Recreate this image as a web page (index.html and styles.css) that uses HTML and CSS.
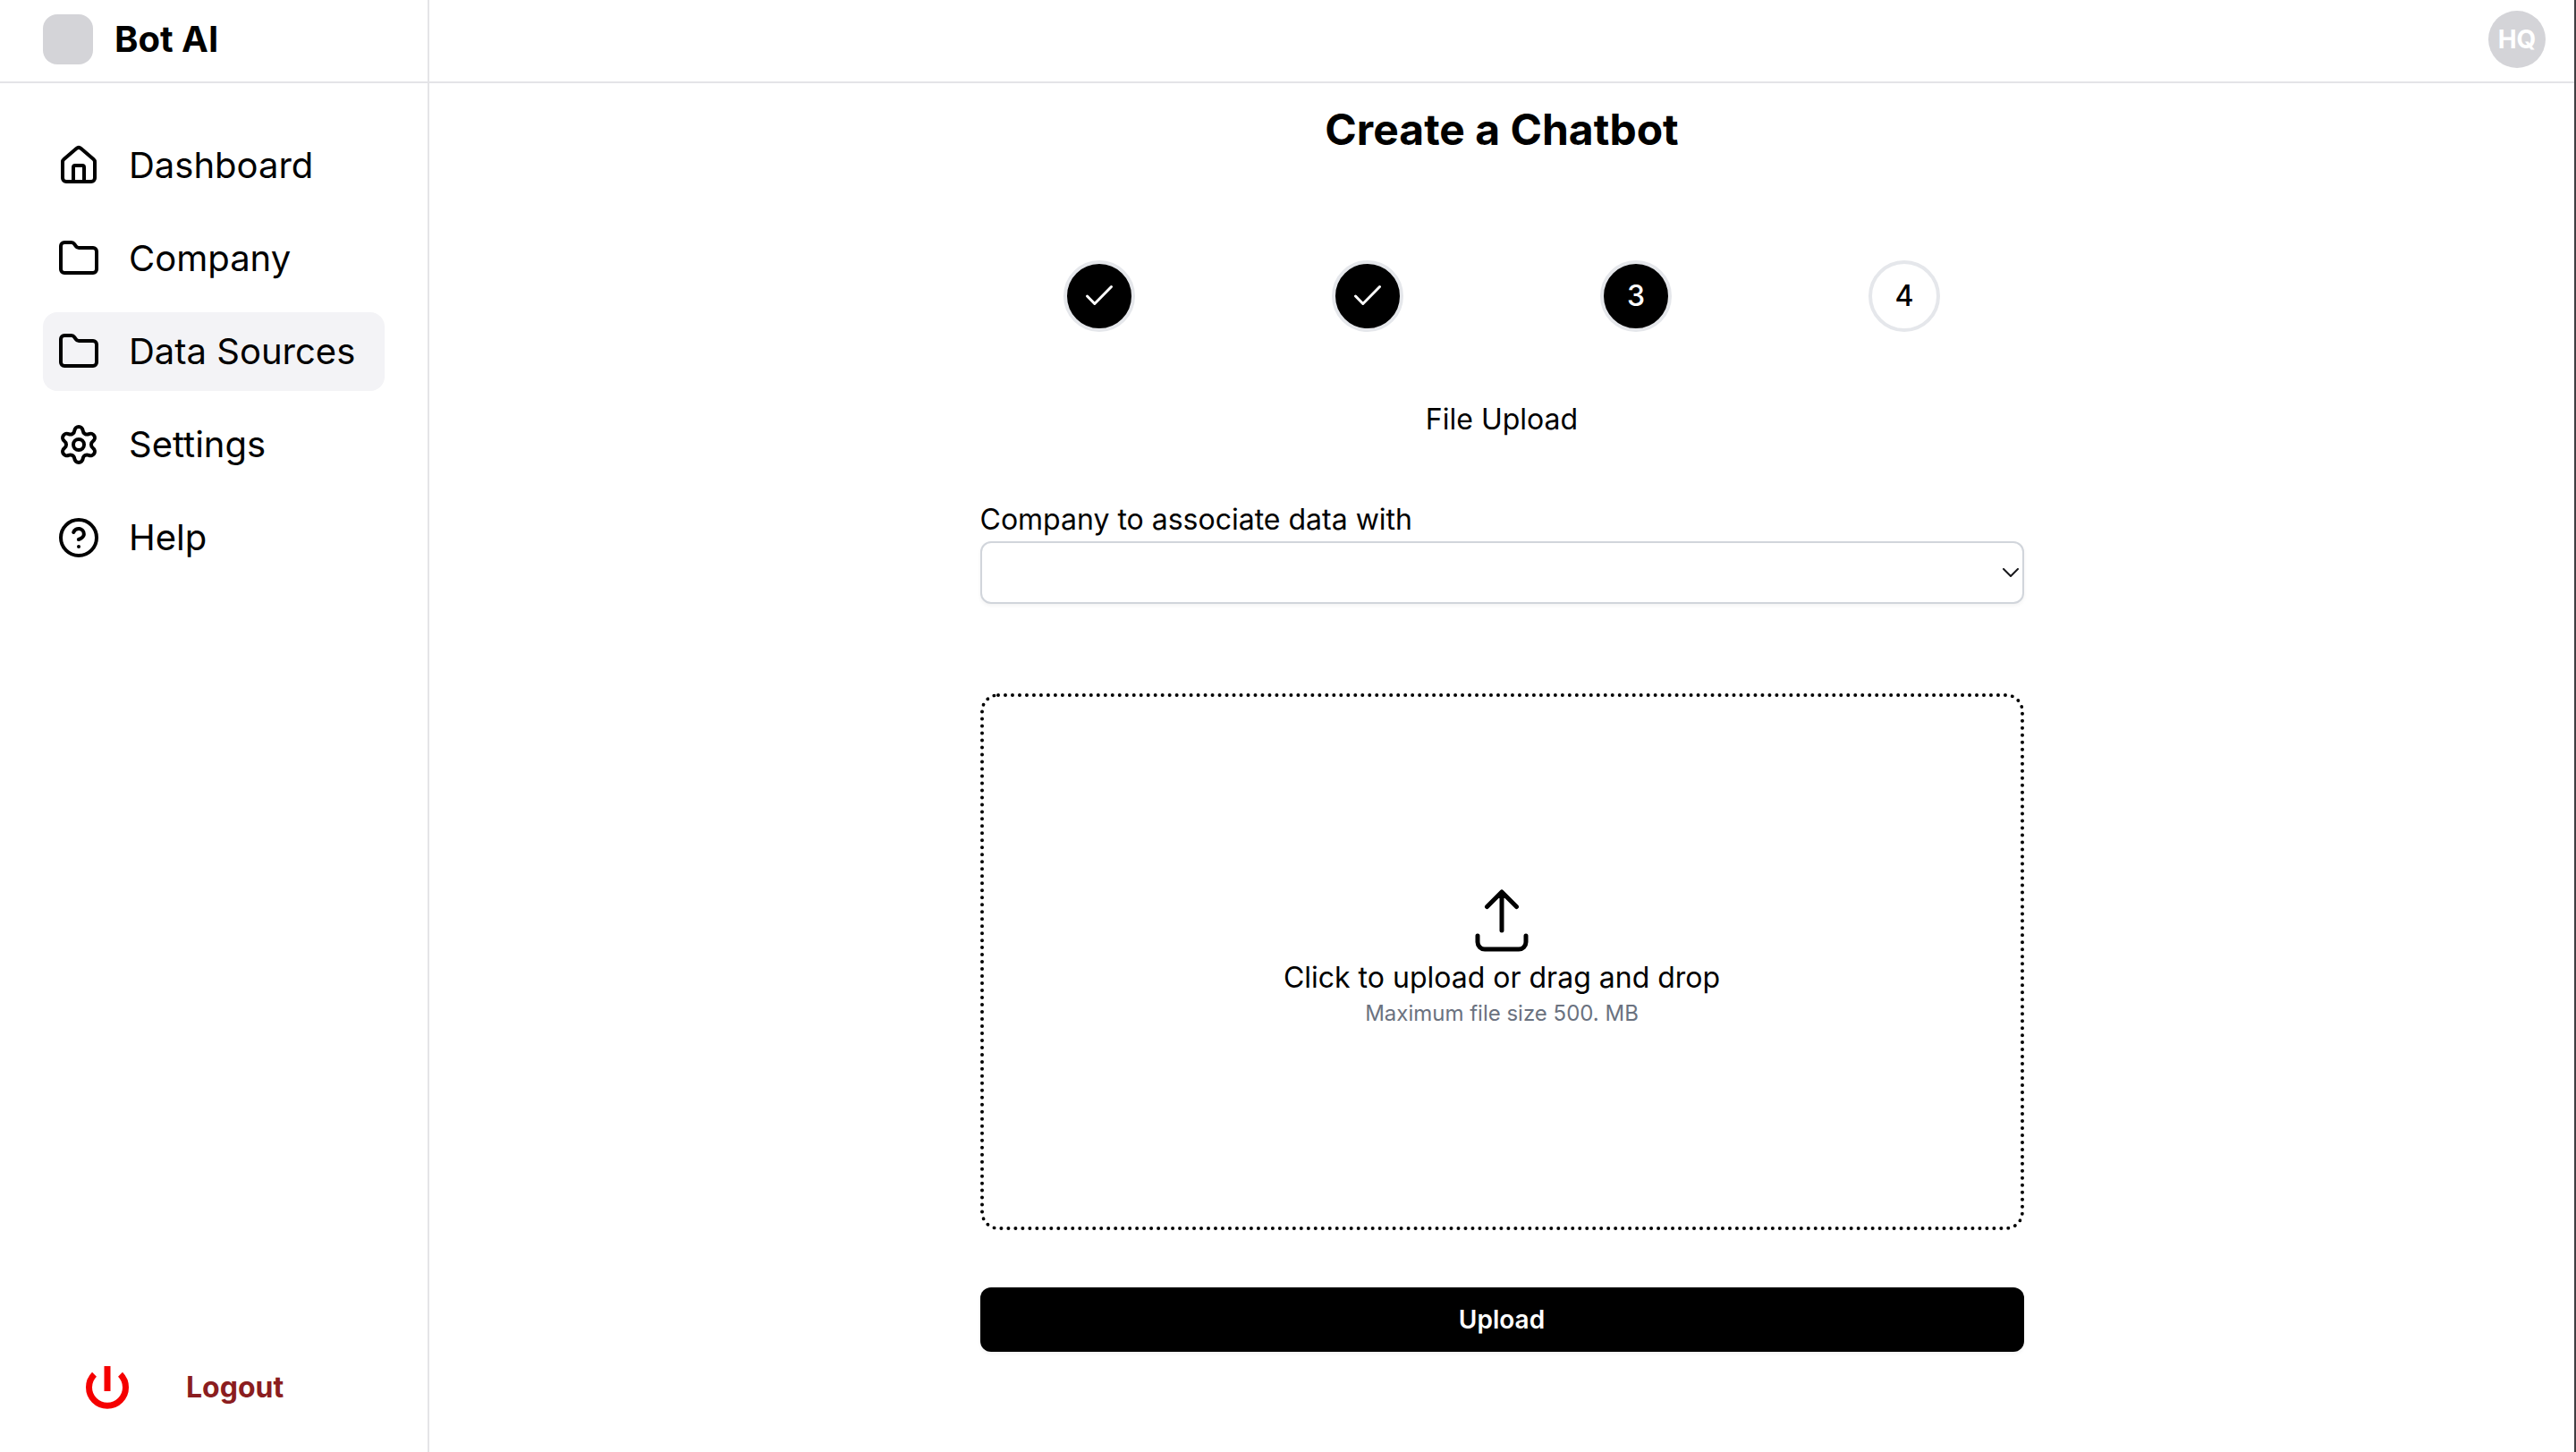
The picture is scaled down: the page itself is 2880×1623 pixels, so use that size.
FILE: index.html
```html
<!DOCTYPE html>
<html lang="en">
<head>
<meta charset="utf-8">
<meta name="viewport" content="width=device-width, initial-scale=1">
<title>Bot AI - Create a Chatbot</title>
<link rel="stylesheet" href="styles.css">
</head>
<body>
<div class="app">
  <aside class="sidebar">
    <div class="brand">
      <span class="brand-logo"></span>
      <span class="brand-name">Bot AI</span>
    </div>
    <nav class="nav">
      <a class="nav-item" href="#">
        <svg class="icon" viewBox="0 0 24 24"><path d="M15 21v-8a1 1 0 0 0-1-1h-4a1 1 0 0 0-1 1v8"/><path d="M3 10a2 2 0 0 1 .709-1.528l7-5.999a2 2 0 0 1 2.582 0l7 5.999A2 2 0 0 1 21 10v9a2 2 0 0 1-2 2H5a2 2 0 0 1-2-2z"/></svg>
        <span>Dashboard</span>
      </a>
      <a class="nav-item" href="#">
        <svg class="icon" viewBox="0 0 24 24"><path d="M20 20a2 2 0 0 0 2-2V8a2 2 0 0 0-2-2h-7.9a2 2 0 0 1-1.69-.9L9.6 3.9A2 2 0 0 0 7.93 3H4a2 2 0 0 0-2 2v13a2 2 0 0 0 2 2Z"/></svg>
        <span>Company</span>
      </a>
      <a class="nav-item active" href="#" aria-current="page">
        <svg class="icon" viewBox="0 0 24 24"><path d="M20 20a2 2 0 0 0 2-2V8a2 2 0 0 0-2-2h-7.9a2 2 0 0 1-1.69-.9L9.6 3.9A2 2 0 0 0 7.93 3H4a2 2 0 0 0-2 2v13a2 2 0 0 0 2 2Z"/></svg>
        <span>Data Sources</span>
      </a>
      <a class="nav-item" href="#">
        <svg class="icon" viewBox="0 0 24 24"><path d="M9.671 4.136a2.34 2.34 0 0 1 4.659 0 2.34 2.34 0 0 0 3.319 1.915 2.34 2.34 0 0 1 2.33 4.033 2.34 2.34 0 0 0 0 3.831 2.34 2.34 0 0 1-2.33 4.033 2.34 2.34 0 0 0-3.319 1.915 2.34 2.34 0 0 1-4.659 0 2.34 2.34 0 0 0-3.32-1.915 2.34 2.34 0 0 1-2.33-4.033 2.34 2.34 0 0 0 0-3.831A2.34 2.34 0 0 1 6.35 6.051a2.34 2.34 0 0 0 3.319-1.915"/><circle cx="12" cy="12" r="3"/></svg>
        <span>Settings</span>
      </a>
      <a class="nav-item" href="#">
        <svg class="icon" viewBox="0 0 24 24"><circle cx="12" cy="12" r="10"/><path d="M9.09 9a3 3 0 0 1 5.83 1c0 2-3 3-3 3"/><path d="M12 17h.01"/></svg>
        <span>Help</span>
      </a>
    </nav>
    <button class="logout" type="button">
      <svg class="power" viewBox="0 0 48 48"><path class="power-ring" d="M9.5 9.2A20.500 20.500 0 1 0 38.500 9.200"/><rect class="power-bar" x="20.500" y="0" width="7" height="28"/></svg>
      <span>Logout</span>
    </button>
  </aside>

  <div class="page">
    <header class="topbar">
      <button class="avatar" type="button">HQ</button>
    </header>
    <main class="content">
      <h1 class="title">Create a Chatbot</h1>
      <ol class="steps">
        <li class="step done"><svg class="check" viewBox="0 0 32 32" aria-label="Step 1 complete"><path d="M2.500 16l8.300 8.500L29.500 5.500"/></svg></li>
        <li class="step done"><svg class="check" viewBox="0 0 32 32" aria-label="Step 2 complete"><path d="M2.500 16l8.300 8.500L29.500 5.500"/></svg></li>
        <li class="step done" aria-current="step">3</li>
        <li class="step">4</li>
      </ol>
      <h2 class="subtitle">File Upload</h2>
      <form class="form">
        <label class="label" for="company">Company to associate data with</label>
        <div class="select-wrap">
          <select class="select" id="company"><option value=""></option></select>
          <svg class="chevron" viewBox="0 0 18 10"><path d="M1 1l8 8 8-8"/></svg>
        </div>
        <label class="dropzone">
          <input class="file-input" type="file">
          <svg class="upload-icon" viewBox="0 0 64 80"><path d="M32 9v42M15.500 24.500L32 8l16.500 16.500M5 57v7a8 8 0 0 0 8 8h38a8 8 0 0 0 8-8v-7"/></svg>
          <span class="drop-title">Click to upload or drag and drop</span>
          <span class="drop-hint">Maximum file size 500. MB</span>
        </label>
        <button class="submit" type="submit">Upload</button>
      </form>
    </main>
  </div>
</div>
</body>
</html>
```
FILE: styles.css
```css
* {
  box-sizing: border-box;
}

body {
  margin: 0;
  background: #fff;
  color: #000;
  font-family: Inter, "Liberation Sans", sans-serif;
  font-size: 32px;
  line-height: 48px;
}

button {
  font: inherit;
  border: 0;
  cursor: pointer;
}

.app {
  display: flex;
  min-height: 100vh;
  border-right: 2px solid #403f42;
}

/* Sidebar */
.sidebar {
  display: flex;
  flex-direction: column;
  flex: 0 0 480px;
  border-right: 2px solid #e4e4e7;
}

.brand {
  display: flex;
  align-items: center;
  gap: 24px;
  padding: 16px 48px 19px;
  border-bottom: 2px solid #e4e4e7;
}

.brand-logo {
  width: 56px;
  height: 56px;
  border-radius: 16px;
  background: #d4d4d8;
}

.brand-name {
  font-size: 40px;
  font-weight: 700;
  line-height: 56px;
}

.nav {
  display: flex;
  flex-direction: column;
  gap: 16px;
  padding: 48px;
}

.nav-item {
  display: flex;
  align-items: center;
  gap: 32px;
  padding: 16px;
  border-radius: 16px;
  color: #000;
  font-size: 40px;
  line-height: 56px;
  text-decoration: none;
}

.nav-item.active {
  background: #f3f3f6;
}

.icon {
  width: 48px;
  height: 48px;
  fill: none;
  stroke: currentColor;
  stroke-width: 2;
  stroke-linecap: round;
  stroke-linejoin: round;
}

.logout {
  display: flex;
  align-items: center;
  gap: 64px;
  margin-top: auto;
  padding: 48px 96px;
  background: none;
  color: #8b1d20;
  font-weight: 700;
}

.power {
  width: 48px;
  height: 48px;
}

.power-ring {
  fill: none;
  stroke: #f50000;
  stroke-width: 7;
}

.power-bar {
  fill: #f50000;
}

/* Page */
.page {
  flex: 1;
  min-width: 0;
}

.topbar {
  display: flex;
  justify-content: flex-end;
  padding: 12px 32px 15px;
  border-bottom: 2px solid #e4e4e7;
}

.avatar {
  width: 64px;
  height: 64px;
  padding: 0;
  border-radius: 50%;
  background: #d4d4d8;
  color: #fff;
  font-size: 28px;
  font-weight: 700;
}

.content {
  width: 50%;
  margin: 0 auto;
  padding: 20px 16px;
}

.title {
  margin: 0;
  font-size: 48px;
  font-weight: 700;
  line-height: 64px;
  text-align: center;
}

.steps {
  display: flex;
  justify-content: center;
  gap: 220px;
  margin: 114px 0 74px;
  padding: 0;
  list-style: none;
}

.step {
  display: flex;
  flex: none;
  align-items: center;
  justify-content: center;
  width: 80px;
  height: 80px;
  border: 4px solid #e5e7eb;
  border-radius: 50%;
  font-weight: 500;
}

.step.done {
  background: #000;
  color: #fff;
}

.check {
  width: 32px;
  height: 32px;
  fill: none;
  stroke: currentColor;
  stroke-width: 3;
  stroke-linecap: round;
  stroke-linejoin: round;
}

.subtitle {
  margin: 0 0 64px;
  font-size: 32px;
  font-weight: 400;
  text-align: center;
}

.form {
  display: flex;
  flex-direction: column;
}

.select-wrap {
  display: grid;
  align-items: center;
  margin-bottom: 100px;
}

.select {
  grid-area: 1 / 1;
  width: 100%;
  height: 70px;
  padding: 0 48px 0 16px;
  border: 2px solid #d1d5db;
  border-radius: 12px;
  background: #fff;
  box-shadow: 0 2px 4px rgba(0, 0, 0, 0.05);
  font: inherit;
  appearance: none;
}

.chevron {
  grid-area: 1 / 1;
  justify-self: end;
  width: 18px;
  height: 10px;
  margin-right: 6px;
  fill: none;
  stroke: #18181b;
  stroke-width: 2;
  stroke-linecap: round;
  stroke-linejoin: round;
  pointer-events: none;
}

.dropzone {
  display: flex;
  flex-direction: column;
  align-items: center;
  justify-content: center;
  min-height: 600px;
  margin-bottom: 64px;
  padding-bottom: 12px;
  border: 4px dotted #000;
  border-radius: 20px;
  cursor: pointer;
}

.file-input {
  position: absolute;
  width: 1px;
  height: 1px;
  opacity: 0;
}

.upload-icon {
  width: 64px;
  height: 80px;
  fill: none;
  stroke: currentColor;
  stroke-width: 5;
  stroke-linecap: round;
  stroke-linejoin: round;
}

.drop-hint {
  color: #6b7280;
  font-size: 24px;
  line-height: 32px;
}

.submit {
  padding: 12px 24px;
  border-radius: 12px;
  background: #000;
  box-shadow: 0 2px 4px rgba(0, 0, 0, 0.05);
  color: #fff;
  font-size: 28px;
  font-weight: 600;
}
```
